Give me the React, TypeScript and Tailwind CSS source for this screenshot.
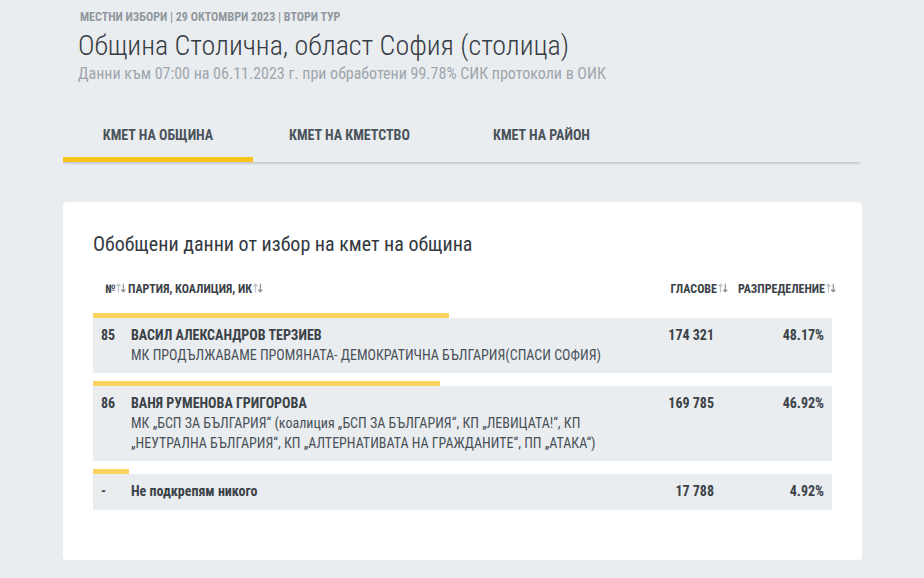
import React from 'react';

type Row = {
  num: string;
  name: string;
  party?: string[];
  votes: string;
  pct: number;
  label: string;
};

const rows: Row[] = [
  {
    num: '85',
    name: 'ВАСИЛ АЛЕКСАНДРОВ ТЕРЗИЕВ',
    party: ['МК ПРОДЪЛЖАВАМЕ ПРОМЯНАТА- ДЕМОКРАТИЧНА БЪЛГАРИЯ(СПАСИ СОФИЯ)'],
    votes: '174 321',
    pct: 48.17,
    label: '48.17%',
  },
  {
    num: '86',
    name: 'ВАНЯ РУМЕНОВА ГРИГОРОВА',
    party: [
      'МК „БСП ЗА БЪЛГАРИЯ“ (коалиция „БСП ЗА БЪЛГАРИЯ“, КП „ЛЕВИЦАТА!“, КП',
      '„НЕУТРАЛНА БЪЛГАРИЯ“, КП „АЛТЕРНАТИВАТА НА ГРАЖДАНИТЕ“, ПП „АТАКА“)',
    ],
    votes: '169 785',
    pct: 46.92,
    label: '46.92%',
  },
  {
    num: '-',
    name: 'Не подкрепям никого',
    votes: '17 788',
    pct: 4.92,
    label: '4.92%',
  },
];

function SortIcon() {
  return (
    <svg width="10" height="10" viewBox="0 0 10 10" className="inline-block ml-[1px] -mt-[3px] align-middle">
      <g fill="none" strokeWidth="1.2" strokeLinecap="round" strokeLinejoin="round">
        <path d="M2.5 9V1.2M0.8 3L2.5 1.2L4.2 3" stroke="#bcc3c9" />
        <path d="M7.3 1V8.8M5.6 7L7.3 8.8L9 7" stroke="#8a9299" />
      </g>
    </svg>
  );
}

const tabs = [
  { label: 'КМЕТ НА ОБЩИНА', w: 'w-[190px]' },
  { label: 'КМЕТ НА КМЕТСТВО', w: 'w-[193px]' },
  { label: 'КМЕТ НА РАЙОН', w: 'w-[191px]' },
];

export default function App() {
  return (
    <div
      className="min-h-[578px] bg-[#eaedf0] px-[63px] pt-[8px] text-[#3b4248]"
      style={{ fontFamily: "'Roboto Condensed', Roboto, 'Liberation Sans', sans-serif" }}
    >
      {/* Header */}
      <div className="pl-[17px]">
        <div className="text-[12px] font-bold leading-[18px] text-[#8f989f]">
          МЕСТНИ ИЗБОРИ | 29 ОКТОМВРИ 2023 | ВТОРИ ТУР
        </div>
        <h1 className="-ml-[2px] mt-[2px] text-[28px] font-light leading-[36px] text-[#363c43]">
          Община Столична, област София (столица)
        </h1>
        <div className="-ml-[2px] text-[16px] leading-[20px] text-[#9da6ad]">
          Данни към 07:00 на 06.11.2023 г. при обработени 99.78% СИК протоколи в ОИК
        </div>
      </div>

      {/* Tabs */}
      <div className="w-[797px] border-b-[1.5px] border-[#c2c8cd] shadow-[0_2px_2px_-1px_rgba(0,0,0,0.12)]">
        <div className="flex">
          {tabs.map((t, i) => (
            <div
              key={t.label}
              className={`${t.w} text-center text-[14px] font-bold leading-[20px] text-[#4a535a] pt-[41px] pb-[12px] border-b-[5px] ${
                i === 0 ? 'border-[#f7c31c]' : 'border-transparent'
              }`}
            >
              {t.label}
            </div>
          ))}
        </div>
      </div>

      {/* Card */}
      <div className="mt-[39px] w-[799px] rounded-[4px] bg-white px-[30px] pt-[30px] pb-[50px]">
        <h2 className="text-[20px] leading-[24px] text-[#33393f]">
          Обобщени данни от избор на кмет на община
        </h2>

        <div className="mt-[25px] -mr-[4px] flex items-center text-[12px] font-bold uppercase leading-[16px] text-[#3b4248]">
          <div className="w-[35px] pl-[12px] whitespace-nowrap">
            №<SortIcon />
          </div>
          <div className="flex-1">
            ПАРТИЯ, КОАЛИЦИЯ, ИК<SortIcon />
          </div>
          <div className="w-[80px] text-right whitespace-nowrap">
            ГЛАСОВЕ<SortIcon />
          </div>
          <div className="w-[108px] text-right whitespace-nowrap">
            РАЗПРЕДЕЛЕНИЕ<SortIcon />
          </div>
        </div>

        <div className="mt-[16px] flex flex-col gap-[8px]">
          {rows.map((r) => (
            <div key={r.num + r.name}>
              <div className="h-[5px] bg-[#fad45f]" style={{ width: `${r.pct}%` }} />
              <div className="flex min-h-[36px] bg-[#eaedf0] pt-[7px] pb-[8px] text-[14px] leading-[20px]">
                <div className="w-[38px] pl-[8px] font-bold">{r.num}</div>
                <div className="flex-1 min-w-0">
                  <div className="font-bold">{r.name}</div>
                  {r.party?.map((p) => (
                    <div key={p} className="text-[#495158]">{p}</div>
                  ))}
                </div>
                <div className="w-[80px] text-right font-bold">{r.votes}</div>
                <div className="w-[118px] pr-[8px] text-right font-bold">{r.label}</div>
              </div>
            </div>
          ))}
        </div>
      </div>
    </div>
  );
}
